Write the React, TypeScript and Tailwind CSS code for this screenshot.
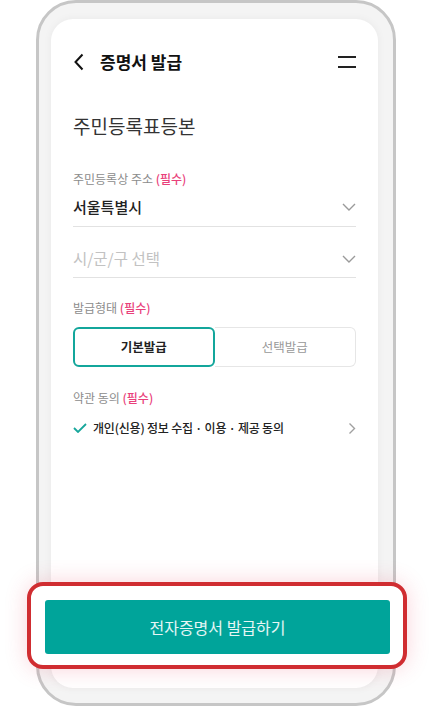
import React, { useState } from "react";

const font = { fontFamily: '"Noto Sans CJK KR", "Noto Sans", sans-serif' };

const ChevronDown = () => (
  <svg width="14" height="8" viewBox="0 0 14 8" fill="none">
    <path d="M1 1l6 6 6-6" stroke="#9a9a9a" strokeWidth="1.4" />
  </svg>
);

const App: React.FC = () => {
  const [issueType, setIssueType] = useState<"basic" | "select">("basic");

  const labelStyles = "text-[12px] leading-[18px] text-[#8c8c8c]";
  const requiredStyles = "font-medium text-[#e9407a]";
  const segmentStyles = "h-[40px] text-[12.5px]";

  return (
    <main
      className="relative w-[432px] h-[708px] overflow-hidden bg-white text-[#222]"
      style={font}
    >
      {/* Phone frame */}
      <div className="pl-[36px]">
        <div className="w-[360px] h-[706px] rounded-[40px] border-[3px] border-[#c6c6c6] bg-[#f4f4f4] pt-[16px] pl-[12px] pr-[15px] pb-[15px]">
          <div className="h-full rounded-[22px] bg-white px-[22px] shadow-[0_0_8px_rgba(0,0,0,0.05)]">
            {/* Header */}
            <div className="pt-[31px] flex items-center h-[55px]">
              <svg width="12" height="18" viewBox="0 0 12 18" fill="none" className="mr-[15px]">
                <path d="M9.5 1.5L2.5 9l7 7.5" stroke="#111" strokeWidth="2" />
              </svg>
              <h1 className="text-[17px] font-bold leading-[24px] text-[#111]">
                증명서 발급
              </h1>
              <div className="ml-auto flex flex-col gap-[8px]">
                <span className="block w-[18px] h-[2px] bg-[#222]" />
                <span className="block w-[18px] h-[2px] bg-[#222]" />
              </div>
            </div>

            <h2 className="mt-[39px] text-[19px] leading-[26px] text-[#333]">
              주민등록표등본
            </h2>

            {/* Address */}
            <p className={`mt-[31px] ${labelStyles}`}>
              주민등록상 주소 <span className={requiredStyles}>(필수)</span>
            </p>
            <div className="h-[39px] flex items-center justify-between border-b border-[#e2e2e2]">
              <span className="text-[15px] font-medium text-[#222]">서울특별시</span>
              <ChevronDown />
            </div>
            <div className="h-[51px] pt-[14px] flex items-center justify-between border-b border-[#e2e2e2]">
              <span className="text-[15.5px] text-[#c2c2c2]">시/군/구 선택</span>
              <ChevronDown />
            </div>

            {/* Issue type */}
            <p className={`mt-[21px] ${labelStyles}`}>
              발급형태 <span className={requiredStyles}>(필수)</span>
            </p>
            <div className="mt-[10px] grid grid-cols-2">
              <button
                onClick={() => setIssueType("basic")}
                className={`${segmentStyles} rounded-l-[6px] ${
                  issueType === "basic"
                    ? "rounded-[6px] border-2 border-[#13a69b] font-bold text-[#222]"
                    : "border border-r-0 border-[#e6e6e6] text-[#999]"
                }`}
              >
                기본발급
              </button>
              <button
                onClick={() => setIssueType("select")}
                className={`${segmentStyles} rounded-r-[6px] ${
                  issueType === "select"
                    ? "rounded-[6px] border-2 border-[#13a69b] font-bold text-[#222]"
                    : "border border-l-0 border-[#e6e6e6] text-[#999]"
                }`}
              >
                선택발급
              </button>
            </div>

            {/* Terms */}
            <p className={`mt-[22px] ${labelStyles}`}>
              약관 동의 <span className={requiredStyles}>(필수)</span>
            </p>
            <div className="mt-[9px] h-[24px] flex items-center">
              <svg width="14" height="10" viewBox="0 0 14 10" fill="none" className="mr-[6px]">
                <path d="M1 5l4 4 8-8" stroke="#17a69b" strokeWidth="1.8" />
              </svg>
              <span className="text-[12px] font-medium text-[#222] tracking-[-0.2px]">
                개인(신용) 정보 수집 · 이용 · 제공 동의
              </span>
              <svg width="8" height="13" viewBox="0 0 8 13" fill="none" className="ml-auto">
                <path d="M1.5 1.5l5 5-5 5" stroke="#a0a0a0" strokeWidth="1.4" />
              </svg>
            </div>
          </div>
        </div>
      </div>

      {/* Highlighted call to action */}
      <div className="absolute left-[27px] top-[582px] w-[380px] rounded-[16px] border-4 border-[#d02d31] bg-white pt-[14px] pl-[14px] pr-[13px] pb-[11px] shadow-[0_0_22px_rgba(230,60,90,0.22)]">
        <button className="w-full h-[54px] rounded-[3px] bg-[#00a49a] text-[16px] text-white/90">
          전자증명서 발급하기
        </button>
      </div>
    </main>
  );
};

export default App;
